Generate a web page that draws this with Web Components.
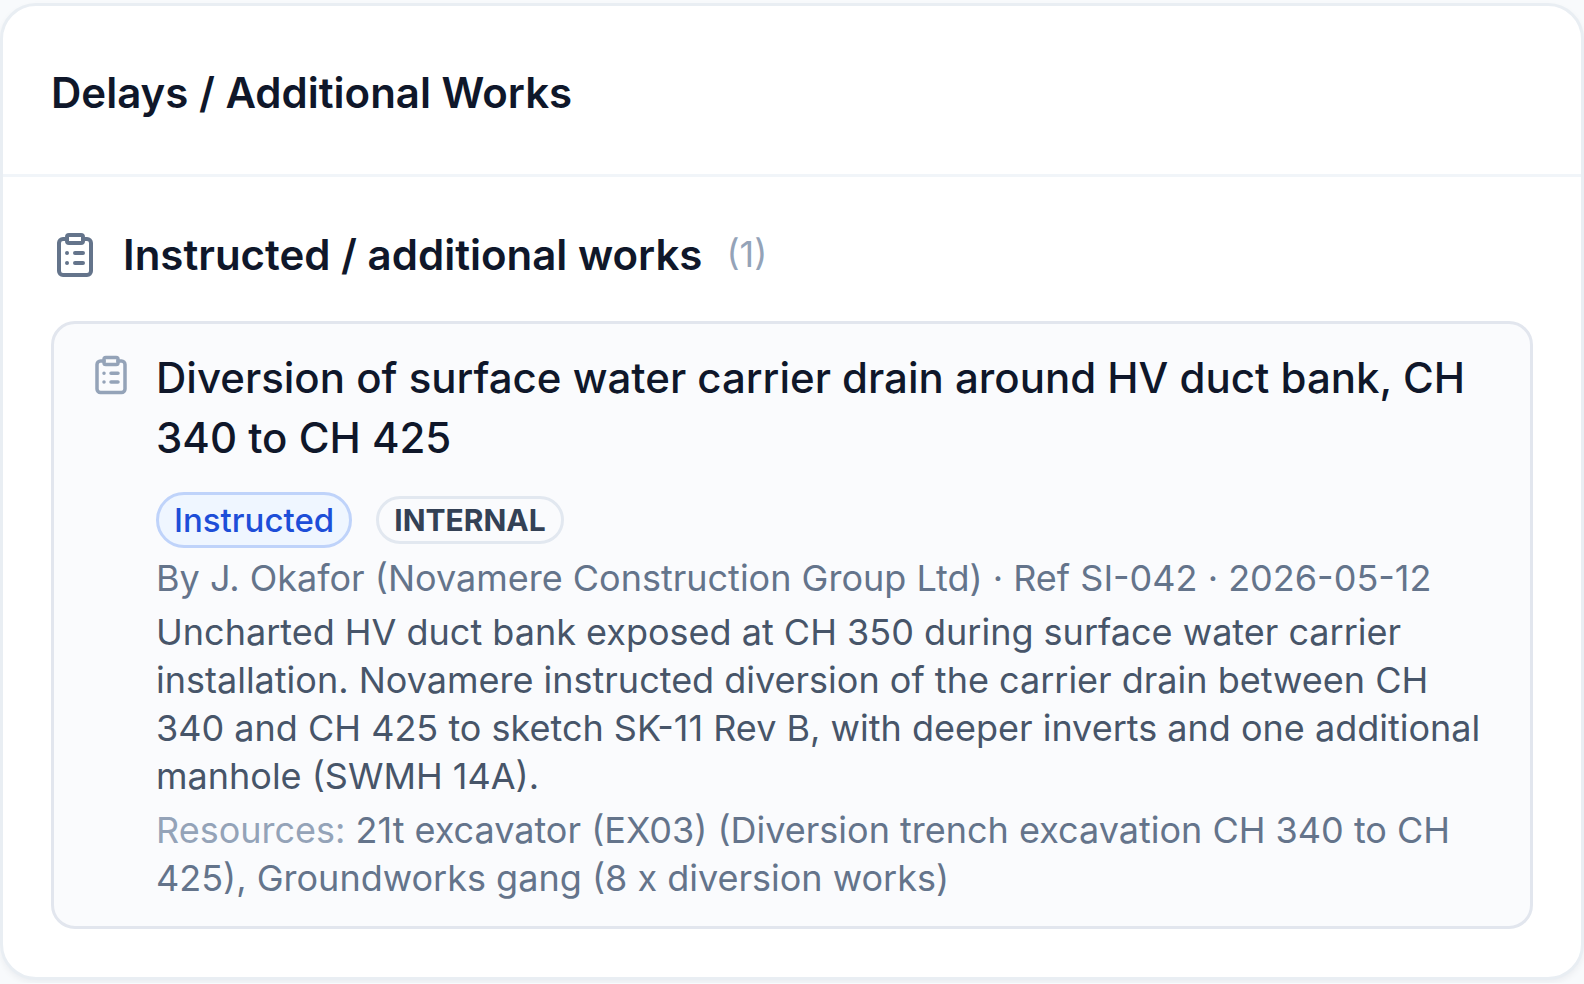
<!DOCTYPE html>
<html lang="en">
<head>
<meta charset="utf-8">
<meta name="viewport" content="width=device-width, initial-scale=1">
<title>Delays / Additional Works</title>
<style>
  body {
    margin: 0;
    padding: 3px 0;
    background: #f8fafc;
    color: #0f172a;
    font-family: Inter, "Liberation Sans", sans-serif;
  }
</style>
</head>
<body>
<works-card>
  <span slot="title">Delays / Additional Works</span>
  <works-section count="1">
    <span slot="title">Instructed / additional works</span>
    <works-item>
      <span slot="title">Diversion of surface water carrier drain around HV duct bank, CH 340 to CH 425</span>
      <status-badge slot="badges" tone="info">Instructed</status-badge>
      <status-badge slot="badges" tone="outline">INTERNAL</status-badge>
      <span slot="meta">By J. Okafor (Novamere Construction Group Ltd) · Ref SI-042 · 2026-05-12</span>
      <span slot="description">Uncharted HV duct bank exposed at CH 350 during surface water carrier installation. Novamere instructed diversion of the carrier drain between CH 340 and CH 425 to sketch SK-11 Rev B, with deeper inverts and one additional manhole (SWMH 14A).</span>
      <span slot="resources">21t excavator (EX03) (Diversion trench excavation CH 340 to CH 425), Groundworks gang (8 x diversion works)</span>
    </works-item>
  </works-section>
</works-card>

<script>
  class BaseElement extends HTMLElement {
    constructor() {
      super();
      this.attachShadow({ mode: "open" }).innerHTML = this.constructor.template;
    }
  }

  customElements.define("clipboard-icon", class extends BaseElement {
    static template = `
      <style>
        :host { display: block; flex: none; width: 48px; height: 48px; }
        svg { display: block; width: 100%; height: 100%; }
      </style>
      <svg viewBox="0 0 24 24" fill="none" stroke="currentColor" stroke-width="2" stroke-linecap="round" stroke-linejoin="round" aria-hidden="true">
        <rect x="8" y="2" width="8" height="4" rx="1"/>
        <path d="M16 4h2a2 2 0 0 1 2 2v14a2 2 0 0 1-2 2H6a2 2 0 0 1-2-2V6a2 2 0 0 1 2-2h2"/>
        <path d="M12 11h4M12 16h4M8 11h.01M8 16h.01"/>
      </svg>`;
  });

  customElements.define("status-badge", class extends BaseElement {
    static template = `
      <style>
        :host {
          display: block;
          box-sizing: border-box;
          padding: 0 15px;
          border: 3px solid #e2e8f0;
          border-radius: 30px;
          white-space: nowrap;
        }
        :host([tone="info"]) {
          border-color: #bfd3fa;
          background: #eff6ff;
          color: #1d4ed8;
          font-size: 33px;
          font-weight: 500;
          line-height: 50px;
        }
        :host([tone="outline"]) {
          color: #334155;
          font-size: 30px;
          font-weight: 700;
          line-height: 42px;
        }
      </style>
      <slot></slot>`;
  });

  customElements.define("works-item", class extends BaseElement {
    static template = `
      <style>
        :host {
          display: flex;
          gap: 24px;
          padding: 24px 36px;
          border: 3px solid #e2e6ee;
          border-radius: 24px;
          background: #fafbfd;
        }
        clipboard-icon { width: 42px; height: 42px; margin-top: 6px; color: #94a3b8; }
        .body { flex: 1; min-width: 0; }
        h4, p { margin: 0; }
        h4 { font-size: 42px; line-height: 60px; font-weight: 500; }
        .badges { display: flex; flex-wrap: wrap; align-items: center; gap: 24px; margin-top: 24px; }
        p { margin-top: 6px; font-size: 36px; line-height: 48px; color: #64748b; }
        .description { color: #475569; }
        .label { color: #94a3b8; }
      </style>
      <clipboard-icon></clipboard-icon>
      <div class="body">
        <h4><slot name="title"></slot></h4>
        <div class="badges"><slot name="badges"></slot></div>
        <p><slot name="meta"></slot></p>
        <p class="description"><slot name="description"></slot></p>
        <p><span class="label">Resources:</span> <slot name="resources"></slot></p>
      </div>`;
  });

  customElements.define("works-section", class extends BaseElement {
    static template = `
      <style>
        :host { display: block; }
        header { display: flex; align-items: center; gap: 24px; margin-bottom: 36px; }
        clipboard-icon { color: #64748b; }
        h3 { margin: 0; font-size: 42px; line-height: 60px; font-weight: 600; }
        .count { font-size: 36px; line-height: 48px; padding-bottom: 2px; color: #94a3b8; }
      </style>
      <header>
        <clipboard-icon></clipboard-icon>
        <h3><slot name="title"></slot></h3>
        <span class="count"></span>
      </header>
      <slot></slot>`;
    connectedCallback() {
      this.shadowRoot.querySelector(".count").textContent = `(${this.getAttribute("count")})`;
    }
  });

  customElements.define("works-card", class extends BaseElement {
    static template = `
      <style>
        :host {
          display: block;
          border: 3px solid #e9eef3;
          border-radius: 36px;
          background: #fff;
          box-shadow: 0 3px 6px rgb(15 23 42 / 5%);
        }
        header { padding: 57px 48px 51px; border-bottom: 3px solid #f1f5f9; }
        h2 { margin: 0; font-size: 42px; line-height: 60px; font-weight: 600; }
        .content { padding: 48px; }
      </style>
      <header><h2><slot name="title"></slot></h2></header>
      <div class="content"><slot></slot></div>`;
  });
</script>
</body>
</html>
